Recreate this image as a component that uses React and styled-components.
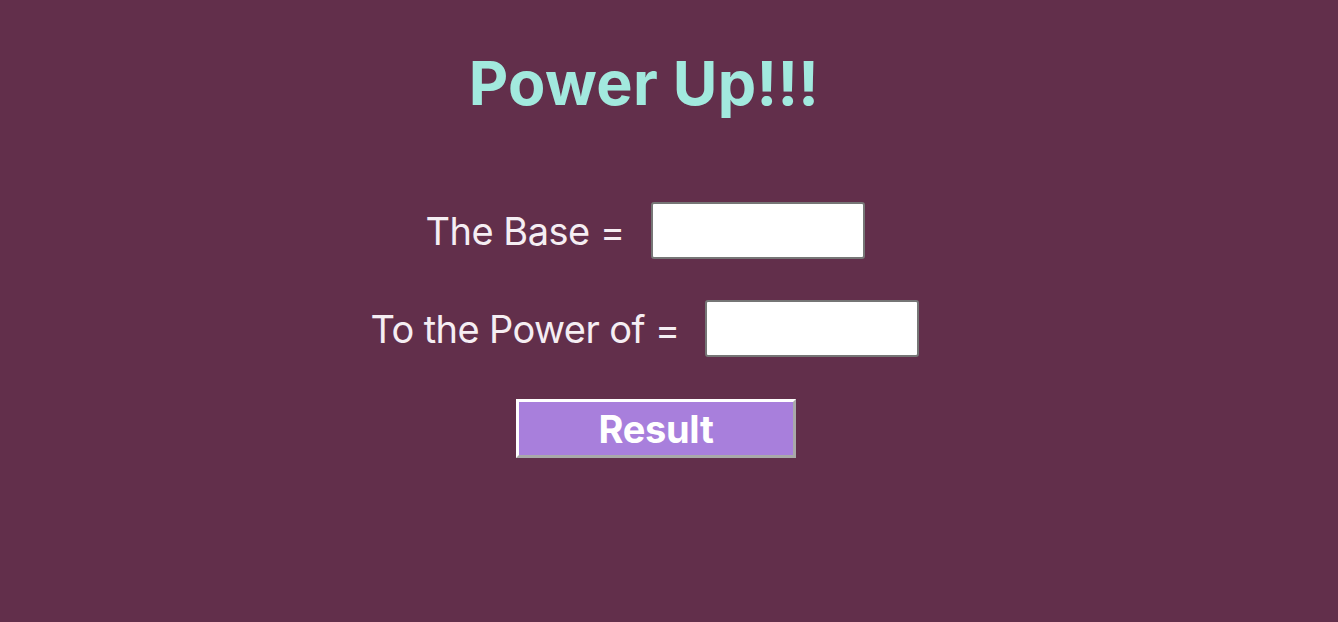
import React, {useState} from "react"
import styled, {createGlobalStyle} from "styled-components"

const GlobalStyle = createGlobalStyle`
  html, body {
    margin: 0;
    padding: 0;
    background-color: #622f4b;
  }
  body {
    font-family: Inter, "Noto Sans", sans-serif;
  }
`

const Page = styled.div`
  min-height: 622px;
  display: flex;
  flex-direction: column;
  align-items: center;
  padding: 47px 48px 0 0;
  box-sizing: border-box;
`

const Title = styled.h1`
  margin: 0 0 0 -2px;
  color: #a2e9de;
  font-size: 61px;
  font-weight: 700;
  line-height: 72px;
  letter-spacing: 0.3px;
`

const Form = styled.form`
  display: flex;
  flex-direction: column;
  align-items: center;
  gap: 41px;
  margin-top: 83px;
`

const Row = styled.div`
  display: flex;
  align-items: center;
  gap: 26px;
`

const Label = styled.label`
  color: #f5eef3;
  font-size: 38px;
  letter-spacing: ${p => (p.$long ? "-0.6px" : "-0.5px")};
`

const Input = styled.input`
  width: 214px;
  height: 57px;
  box-sizing: border-box;
  border: 2px solid #767676;
  border-radius: 3px;
  background: #fff;
  font-size: 24px;
`

const Button = styled.button`
  width: 280px;
  height: 59px;
  margin: 1px 0 0 22px;
  box-sizing: border-box;
  background-color: #a87fdc;
  border-style: solid;
  border-width: 3px;
  border-color: #fff #a9a9a9 #a9a9a9 #fff;
  color: #fff;
  font-family: Inter, sans-serif;
  font-size: 38px;
  font-weight: 700;
  letter-spacing: -0.3px;
  cursor: pointer;
`

function App() {
  const [base, setBase] = useState("")
  const [power, setPower] = useState("")

  return (
    <Page>
      <GlobalStyle />
      <Title>Power Up!!!</Title>
      <Form onSubmit={e => e.preventDefault()}>
        <Row>
          <Label htmlFor="base">The Base =</Label>
          <Input id="base" value={base} onChange={e => setBase(e.target.value)} />
        </Row>
        <Row>
          <Label htmlFor="power" $long>To the Power of =</Label>
          <Input id="power" value={power} onChange={e => setPower(e.target.value)} />
        </Row>
        <Button type="submit">Result</Button>
      </Form>
    </Page>
  )
}

export default App
